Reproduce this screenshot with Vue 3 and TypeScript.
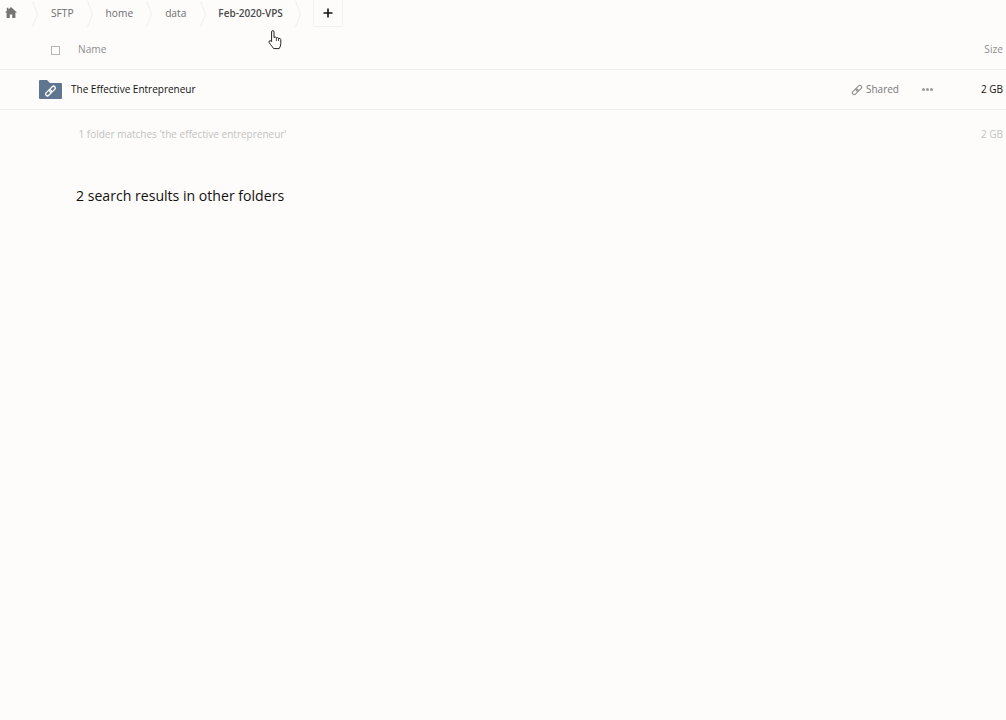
<template>
  <div class="page">
    <nav class="crumbs">
      <span class="home">
        <svg width="12" height="11" viewBox="0 0 12 11"><path d="M6 0 L12 5.4 H10.4 V11 H7.2 V7.6 H4.8 V11 H1.6 V5.4 H0 L1.8 3.8 V0.8 H3.4 V2.4 Z" fill="#757575" /></svg>
      </span>
      <template v-for="(c, i) in crumbs" :key="c.label">
        <svg class="chev" width="6" height="26" viewBox="0 0 6 26"><path d="M0.5 0 L5.5 13 L0.5 26" fill="none" stroke="#efeeec" stroke-width="1" /></svg>
        <span class="crumb" :class="{ last: i === crumbs.length - 1 }" :style="{ marginRight: c.after + 'px' }">{{ c.label }}</span>
      </template>
      <svg class="chev" width="6" height="26" viewBox="0 0 6 26"><path d="M0.5 0 L5.5 13 L0.5 26" fill="none" stroke="#efeeec" stroke-width="1" /></svg>
      <button class="add">
        <svg width="10" height="10" viewBox="0 0 10 10"><path d="M5 0.5 V9.5 M0.5 5 H9.5" stroke="#111" stroke-width="1.6" /></svg>
      </button>
    </nav>

    <div class="head">
      <span class="check" />
      <span class="head-name">Name</span>
      <span class="head-size">Size</span>
    </div>

    <div class="row">
      <svg class="folder" width="23" height="19" viewBox="0 0 23 19">
        <path d="M0 1 Q0 0 1 0 H8 L11 3 H22 Q23 3 23 4 V18 Q23 19 22 19 H1 Q0 19 0 18 Z" fill="#5f7690" />
        <g fill="none" stroke="#fff" stroke-width="1.3" transform="rotate(-45 11.5 11)">
          <rect x="5.4" y="9.2" width="7" height="3.6" rx="1.8" />
          <rect x="10.6" y="9.2" width="7" height="3.6" rx="1.8" />
        </g>
      </svg>
      <span class="file-name">The Effective Entrepreneur</span>
      <span class="shared">
        <svg width="12" height="12" viewBox="0 0 12 12">
          <g fill="none" stroke="#8d8d8d" stroke-width="1.1" transform="rotate(-45 6 6)">
            <rect x="0.2" y="4.2" width="6.6" height="3.6" rx="1.8" />
            <rect x="5.2" y="4.2" width="6.6" height="3.6" rx="1.8" />
          </g>
        </svg>
        Shared
      </span>
      <span class="more"><i /><i /><i /></span>
      <span class="file-size">2 GB</span>
    </div>

    <div class="summary">
      <span>1 folder matches 'the effective entrepreneur'</span>
      <span>2 GB</span>
    </div>

    <h2 class="results">2 search results in other folders</h2>

    <svg class="cursor" width="14" height="20" viewBox="0 0 14 20">
      <path d="M3.6 11 V2 Q3.6 0.6 4.8 0.6 Q6 0.6 6 2 V7.5 Q8 6.6 8.4 7.8 Q10 7 10.5 8.4 Q12.6 8 12.8 9.6 V13.5 Q12.8 16 11.2 18.6 H5.6 Q4.4 16.6 2.6 14.6 Q0.4 12.2 1.2 11 Q2.2 10 3.6 11.6 Z" fill="#fff" stroke="#222" stroke-width="1" stroke-linejoin="round" />
      <path d="M8.4 7.8 V11 M10.5 8.4 V11" stroke="#222" stroke-width="0.8" fill="none" />
    </svg>
  </div>
</template>

<script setup lang="ts">
const crumbs = [
  { label: 'SFTP', after: 13 },
  { label: 'home', after: 13 },
  { label: 'data', after: 14 },
  { label: 'Feb-2020-VPS', after: 12 }
]
</script>

<style>
html, body { margin: 0; background: #fdfcfb; }
</style>

<style scoped>
.page {
  position: relative;
  height: 720px;
  overflow: hidden;
  background: #fdfcfb;
  font-family: "Open Sans", sans-serif;
  font-size: 10px;
  color: #111;
}
.crumbs { display: flex; align-items: center; height: 27px; padding-left: 5px; }
.home { display: flex; margin: 0 15px 2px 0; }
.chev { flex: none; }
.crumb { margin: 0 0 2px 13px; color: #6e6e6e; font-size: 10.2px; }
.crumb.last { margin-left: 12px; color: #4a4a4a; font-size: 10px; font-weight: 600; }
.add {
  display: flex; align-items: center; justify-content: center;
  width: 30px; height: 27px; margin-left: 12px; padding: 0;
  background: none; border: 1px solid #f2f1ef; border-top: none; border-radius: 0 0 2px 2px;
}
.head {
  display: flex; align-items: center; box-sizing: border-box; height: 43px; padding-top: 2px;
  border-bottom: 1px solid #eeeeec; color: #8e8e8e; font-size: 10.2px;
}
.check { width: 7px; height: 7px; margin: 2px 0 0 51px; border: 1px solid #b5b5b5; background: #fff; }
.head-name { margin-left: 18px; }
.head-size { margin-left: auto; padding-right: 3px; }
.row {
  display: flex; align-items: center; height: 39px;
  border-bottom: 1px solid #eeeeec;
}
.folder { margin-left: 39px; flex: none; }
.file-name { margin: 0 0 2px 9px; }
.shared { display: flex; align-items: center; gap: 3px; margin: 0 0 2px auto; color: #777; }
.shared svg { margin-top: 2px; }
.more { display: flex; gap: 1px; margin-left: 23px; }
.more i { width: 3px; height: 3px; border-radius: 50%; background: #9a9a9a; }
.file-size { margin: 0 3px 2px 48px; text-align: right; }
.summary {
  display: flex; justify-content: space-between;
  padding: 17px 3px 0 78.5px; color: #c2c2c2; line-height: 15px;
}
.results { margin: 44px 0 0 76px; font-size: 14.1px; font-weight: 400; line-height: 20px; }
.cursor { position: absolute; left: 268px; top: 30px; }
</style>
